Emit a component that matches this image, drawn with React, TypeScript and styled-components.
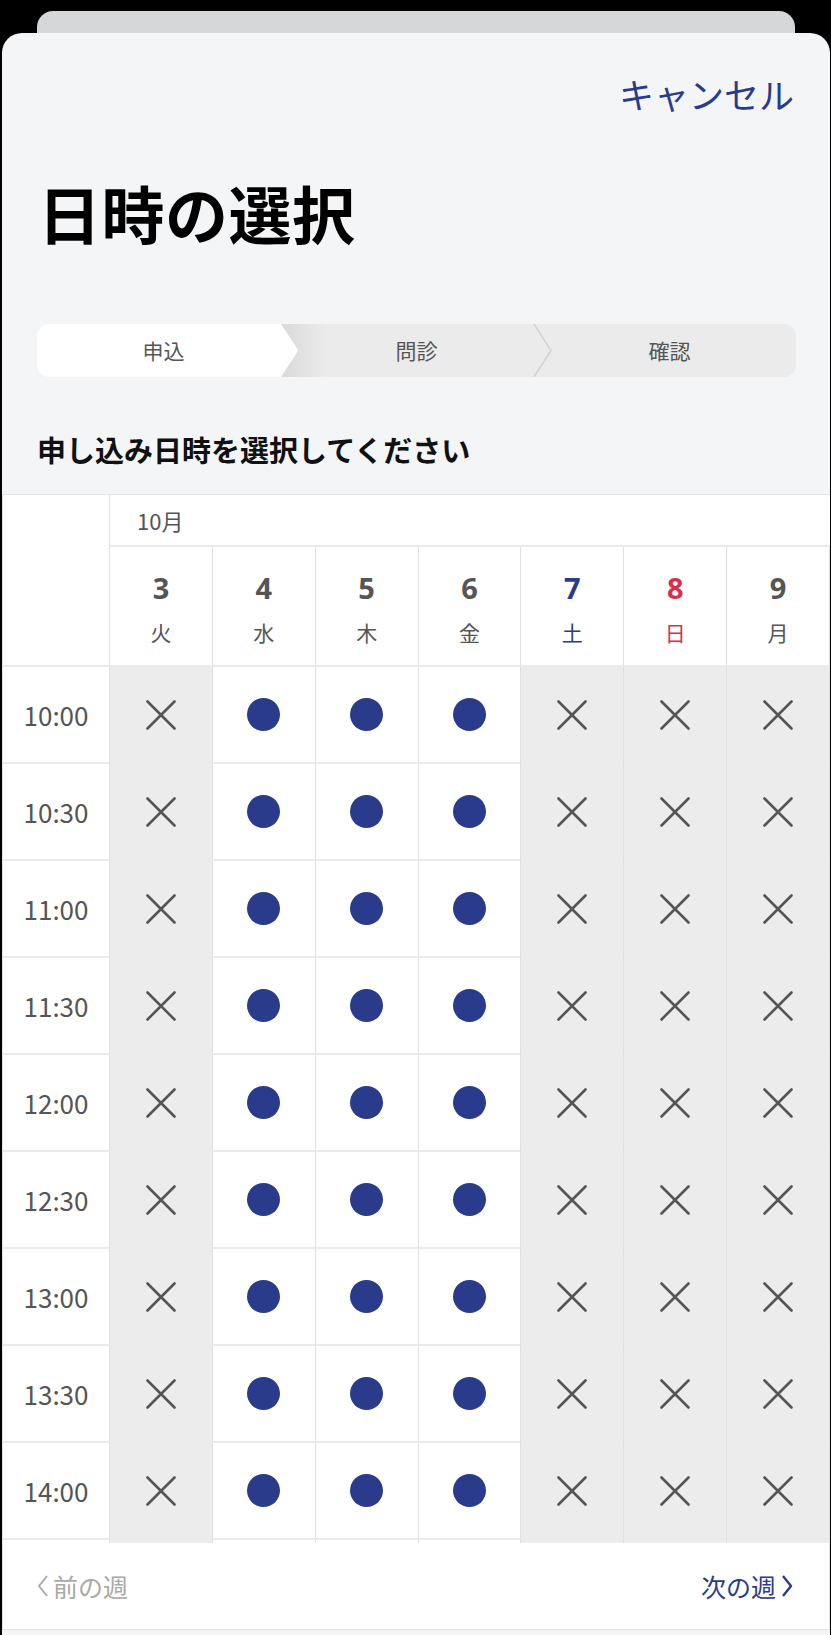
import React from 'react';
import styled, { createGlobalStyle, css } from 'styled-components';

const GlobalStyle = createGlobalStyle`
  html, body {
    margin: 0;
    padding: 0;
    background: #000;
  }
  body {
    font-family: "Noto Sans CJK JP", "Noto Sans", sans-serif;
    -webkit-font-smoothing: antialiased;
  }
`;

type Tone = 'normal' | 'sat' | 'sun';

interface Day {
  date: number;
  weekday: string;
  tone: Tone;
  open: boolean;
}

const days: Day[] = [
  { date: 3, weekday: '火', tone: 'normal', open: false },
  { date: 4, weekday: '水', tone: 'normal', open: true },
  { date: 5, weekday: '木', tone: 'normal', open: true },
  { date: 6, weekday: '金', tone: 'normal', open: true },
  { date: 7, weekday: '土', tone: 'sat', open: false },
  { date: 8, weekday: '日', tone: 'sun', open: false },
  { date: 9, weekday: '月', tone: 'normal', open: false },
];

// the last entry is the row that only peeks in under the fold
const times = ['10:00', '10:30', '11:00', '11:30', '12:00', '12:30', '13:00', '13:30', '14:00', ''];

const steps = ['申込', '問診', '確認'];

const NAVY = '#2b3b8b';
const LINE_V = '#e0e0e0';
const LINE_H = '#ebebeb';

export default function App(): JSX.Element {
  return (
    <Screen>
      <GlobalStyle />
      <BackCard />
      <Sheet>
        <TopBar>
          <CancelButton type="button">キャンセル</CancelButton>
        </TopBar>
        <Title>日時の選択</Title>

        <Stepper>
          {steps.map((label, i) => (
            <Step key={label} $active={i === 0} $afterActive={i === 1}>
              <StepLabel>{label}</StepLabel>
              {i === 1 && (
                <Divider width="20" height="53" viewBox="0 0 20 53">
                  <polyline points="1,0 18,26.5 1,53" fill="none" stroke="#d2d2d2" strokeWidth="1.5" />
                </Divider>
              )}
            </Step>
          ))}
        </Stepper>

        <Lead>申し込み日時を選択してください</Lead>

        <HeadGrid>
          <Corner />
          <MonthCell>10月</MonthCell>
          {days.map((d) => (
            <DayCell key={d.date} $tone={d.tone}>
              <DayNum>{d.date}</DayNum>
              <DayName>{d.weekday}</DayName>
            </DayCell>
          ))}
        </HeadGrid>

        <Scroller>
          <BodyGrid>
            {times.map((t, row) => (
              <React.Fragment key={row}>
                <TimeCell>{t}</TimeCell>
                {days.map((d) => (
                  <Slot key={d.date} $open={d.open}>
                    {d.open ? (
                      <Dot />
                    ) : (
                      <svg width="30" height="30" viewBox="0 0 30 30">
                        <path d="M1.5 1.5 L28.5 28.5 M28.5 1.5 L1.5 28.5" stroke="#555" strokeWidth="2.6" strokeLinecap="round" />
                      </svg>
                    )}
                  </Slot>
                ))}
              </React.Fragment>
            ))}
          </BodyGrid>
        </Scroller>

        <Footer>
          <WeekLink $disabled>
            <svg width="11" height="22" viewBox="0 0 11 22">
              <polyline points="10,1 2,11 10,21" fill="none" stroke="currentColor" strokeWidth="2" strokeLinejoin="round" />
            </svg>
            <span>前の週</span>
          </WeekLink>
          <WeekLink>
            <span>次の週</span>
            <svg width="12" height="22" viewBox="0 0 12 22">
              <polyline points="2,1 10,11 2,21" fill="none" stroke="currentColor" strokeWidth="2.4" strokeLinejoin="round" />
            </svg>
          </WeekLink>
        </Footer>
      </Sheet>
    </Screen>
  );
}

const Screen = styled.div`
  width: 831px;
  height: 1635px;
  overflow: hidden;
  background: #000;
  padding-top: 11px;
  box-sizing: border-box;
`;

const BackCard = styled.div`
  height: 22px;
  margin: 0 36px 0 37px;
  background: #d6d7d9;
  border-radius: 16px 16px 0 0;
`;

const Sheet = styled.div`
  margin: 0 1px 0 2px;
  height: 1602px;
  background: #f4f5f7;
  border-radius: 20px 20px 0 0;
  overflow: hidden;
  display: flex;
  flex-direction: column;
`;

const TopBar = styled.div`
  display: flex;
  justify-content: flex-end;
  padding: 41px 36px 0 0;
`;

const CancelButton = styled.button`
  border: 0;
  background: none;
  padding: 0;
  font-family: inherit;
  font-size: 35px;
  line-height: 40px;
  color: ${NAVY};
  cursor: pointer;
`;

const Title = styled.h1`
  margin: 61px 0 0 36px;
  font-size: 63px;
  line-height: 74px;
  font-weight: 700;
  color: #000;
  letter-spacing: 0.5px;
`;

const Stepper = styled.div`
  margin: 75px 34px 0 35px;
  height: 53px;
  display: grid;
  grid-template-columns: repeat(3, 1fr);
  background: #ebebeb;
  border-radius: 12px;
`;

const Step = styled.div<{ $active?: boolean; $afterActive?: boolean }>`
  position: relative;
  display: flex;
  align-items: center;
  justify-content: center;
  z-index: 1;

  ${({ $active }) =>
    $active &&
    css`
      z-index: 2;
      &::before {
        content: '';
        position: absolute;
        top: 0;
        bottom: 0;
        left: 0;
        right: -8px;
        background: #fff;
        border-radius: 12px 0 0 12px;
        clip-path: polygon(0 0, calc(100% - 17px) 0, calc(100% - 3px) 40%, 100% 50%, calc(100% - 3px) 60%, calc(100% - 17px) 100%, 0 100%);
      }
    `}

  ${({ $afterActive }) =>
    $afterActive &&
    css`
      &::before {
        content: '';
        position: absolute;
        top: 0;
        bottom: 0;
        left: -10px;
        width: 46px;
        background: linear-gradient(to right, #d9d9d9, rgba(235, 235, 235, 0));
      }
    `}
`;

const StepLabel = styled.span`
  position: relative;
  font-size: 21px;
  line-height: 1;
  color: #555;
`;

const Divider = styled.svg`
  position: absolute;
  top: 0;
  right: -10px;
`;

const Lead = styled.h2`
  margin: 52px 0 0 35px;
  font-size: 29px;
  line-height: 40px;
  font-weight: 700;
  color: #111;
`;

const HeadGrid = styled.div`
  margin-top: 25px;
  display: grid;
  grid-template-columns: 107px repeat(7, 1fr);
  grid-template-rows: 52px 120px;
  background: #fff;
  border-top: 1px solid #e3e3e3;
  border-left: 1px solid #e3e3e3;
`;

const Corner = styled.div`
  grid-row: span 2;
  border-right: 1px solid ${LINE_V};
  border-bottom: 2px solid ${LINE_H};
`;

const MonthCell = styled.div`
  grid-column: 2 / -1;
  display: flex;
  align-items: center;
  padding-left: 27px;
  font-size: 22px;
  color: #555;
  border-bottom: 2px solid ${LINE_H};
`;

const toneColor: Record<Tone, string> = {
  normal: '#555',
  sat: NAVY,
  sun: '#d7304e',
};

const DayCell = styled.div<{ $tone: Tone }>`
  display: flex;
  flex-direction: column;
  align-items: center;
  padding-top: 24px;
  color: ${({ $tone }) => toneColor[$tone]};
  border-right: 1px solid ${LINE_V};
  border-bottom: 2px solid ${LINE_H};
`;

const DayNum = styled.div`
  font-family: "Noto Sans", "Noto Sans CJK JP", sans-serif;
  font-size: 29px;
  line-height: 34px;
  font-weight: 700;
`;

const DayName = styled.div`
  margin-top: 13px;
  font-size: 21px;
  line-height: 28px;
`;

const Scroller = styled.div`
  height: 876px;
  overflow: hidden;
  flex-shrink: 0;
`;

const BodyGrid = styled.div`
  display: grid;
  grid-template-columns: 107px repeat(7, 1fr);
  grid-auto-rows: 97px;
  background: #fff;
  border-left: 1px solid #e3e3e3;
`;

const TimeCell = styled.div`
  display: flex;
  align-items: center;
  justify-content: center;
  font-size: 26px;
  color: #555;
  border-right: 1px solid ${LINE_V};
  border-bottom: 2px solid ${LINE_H};
`;

const Slot = styled.div<{ $open: boolean }>`
  display: flex;
  align-items: center;
  justify-content: center;
  background: ${({ $open }) => ($open ? '#fff' : '#ececec')};
  border-right: 1px solid ${LINE_V};
  border-bottom: 2px solid ${LINE_H};
`;

const Dot = styled.span`
  width: 33px;
  height: 33px;
  border-radius: 50%;
  background: ${NAVY};
`;

const Footer = styled.div`
  height: 86px;
  flex-shrink: 0;
  display: flex;
  align-items: center;
  justify-content: space-between;
  padding: 0 36px 0 34px;
  background: #fff;
  border: 1px solid #e3e3e3;
  border-top: 0;
`;

const WeekLink = styled.button<{ $disabled?: boolean }>`
  display: flex;
  align-items: center;
  gap: 5px;
  border: 0;
  background: none;
  padding: 0;
  font-family: inherit;
  font-size: 25px;
  line-height: 1;
  color: ${({ $disabled }) => ($disabled ? '#a9a9a9' : NAVY)};
  cursor: ${({ $disabled }) => ($disabled ? 'default' : 'pointer')};
`;
